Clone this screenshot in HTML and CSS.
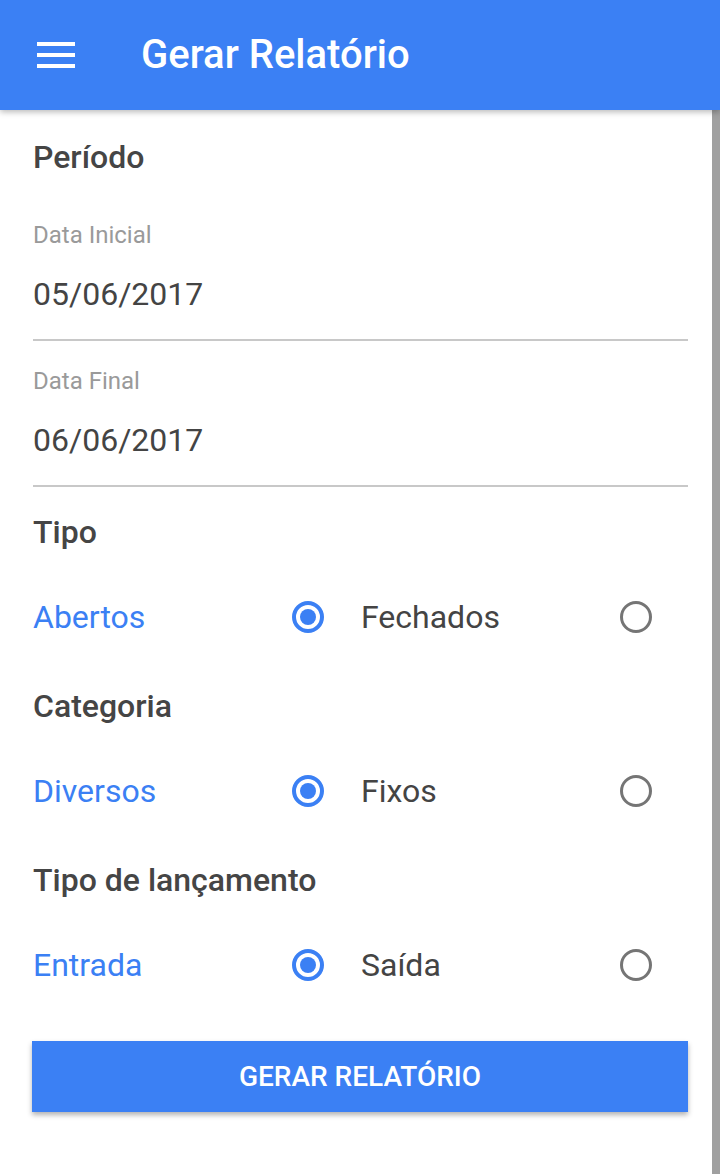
FILE: index.html
```html
<!DOCTYPE html>
<html lang="pt-BR">
<head>
<meta charset="utf-8">
<title>Gerar Relatório</title>
<link rel="stylesheet" href="styles.css">
</head>
<body>
<header class="appbar">
  <svg class="menu-icon" width="38" height="26" viewBox="0 0 38 26" aria-hidden="true">
    <rect x="0" y="0" width="38" height="4" fill="#fff"/>
    <rect x="0" y="11" width="38" height="4" fill="#fff"/>
    <rect x="0" y="22" width="38" height="4" fill="#fff"/>
  </svg>
  <h1 class="title">Gerar Relatório</h1>
</header>
<div class="body-wrap">
  <main class="content">
    <h2 class="heading heading-first">Período</h2>
    <div class="field">
      <div class="field-label">Data Inicial</div>
      <div class="field-value">05/06/2017</div>
    </div>
    <div class="field">
      <div class="field-label">Data Final</div>
      <div class="field-value">06/06/2017</div>
    </div>

    <h2 class="heading">Tipo</h2>
    <div class="radio-row">
      <div class="option"><span class="opt-label active">Abertos</span><span class="radio checked"></span></div>
      <div class="option"><span class="opt-label">Fechados</span><span class="radio"></span></div>
    </div>

    <h2 class="heading">Categoria</h2>
    <div class="radio-row">
      <div class="option"><span class="opt-label active">Diversos</span><span class="radio checked"></span></div>
      <div class="option"><span class="opt-label">Fixos</span><span class="radio"></span></div>
    </div>

    <h2 class="heading">Tipo de lançamento</h2>
    <div class="radio-row">
      <div class="option"><span class="opt-label active">Entrada</span><span class="radio checked"></span></div>
      <div class="option"><span class="opt-label">Saída</span><span class="radio"></span></div>
    </div>

    <button class="btn" type="button">GERAR RELATÓRIO</button>
  </main>
  <div class="scrollbar"></div>
</div>
</body>
</html>
```
FILE: styles.css
```css
* { box-sizing: border-box; }
html, body {
  margin: 0;
  padding: 0;
  height: 1174px;
  overflow: hidden;
  background: #fff;
  font-family: Roboto, "Liberation Sans", sans-serif;
}
.appbar {
  position: relative;
  z-index: 2;
  height: 110px;
  background: #3b80f4;
  display: flex;
  align-items: center;
  padding-left: 37px;
  box-shadow: 0 2px 6px rgba(0,0,0,0.28);
}
.menu-icon { display: block; margin-top: -1px; }
.title {
  margin: 0 0 0 66px;
  color: #fff;
  font-size: 40px;
  font-weight: 500;
  line-height: 1;
}
.body-wrap {
  display: flex;
  height: 1064px;
}
.content {
  flex: 1;
  padding: 27px 24px 0 33px;
}
.scrollbar {
  width: 8px;
  background: #a0a0a0;
}
.heading {
  margin: 25px 0 0;
  height: 40px;
  line-height: 40px;
  font-size: 32px;
  font-weight: 500;
  color: #454545;
}
.heading-first { margin-top: 0; }
.field {
  margin-top: 25px;
  border-bottom: 2px solid #c8c8c8;
  padding-bottom: 25px;
}
.heading-first + .field { margin-top: 43px; }
.field-label {
  height: 30px;
  line-height: 30px;
  font-size: 24px;
  color: #9a9a9a;
}
.field-value {
  margin-top: 24px;
  height: 40px;
  line-height: 40px;
  font-size: 32px;
  color: #444;
}
.radio-row {
  margin-top: 35px;
  height: 60px;
  display: grid;
  grid-template-columns: 307px 307px;
  column-gap: 21px;
  margin-bottom: 39px;
}
.radio-row + .heading { margin-top: 0; }
.option {
  display: flex;
  align-items: center;
  justify-content: space-between;
  padding-right: 16px;
}
.opt-label {
  font-size: 32px;
  color: #444;
}
.opt-label.active { color: #3b80f4; }
.radio {
  width: 32px;
  height: 32px;
  border-radius: 50%;
  border: 3.5px solid #757575;
  display: flex;
  align-items: center;
  justify-content: center;
}
.radio.checked { border: 4px solid #3b80f4; }
.radio.checked::after {
  content: "";
  width: 16px;
  height: 16px;
  border-radius: 50%;
  background: #3b80f4;
}
.radio-row:last-of-type { margin-bottom: 0; }
.btn {
  display: block;
  margin-top: 46px;
  width: 656px;
  height: 71px;
  border: 0;
  background: #3b80f4;
  color: #fff;
  font-family: Roboto, "Liberation Sans", sans-serif;
  font-size: 28px;
  font-weight: 500;
  box-shadow: 0 3px 5px rgba(0,0,0,0.3);
  margin-left: -1px;
}
```
